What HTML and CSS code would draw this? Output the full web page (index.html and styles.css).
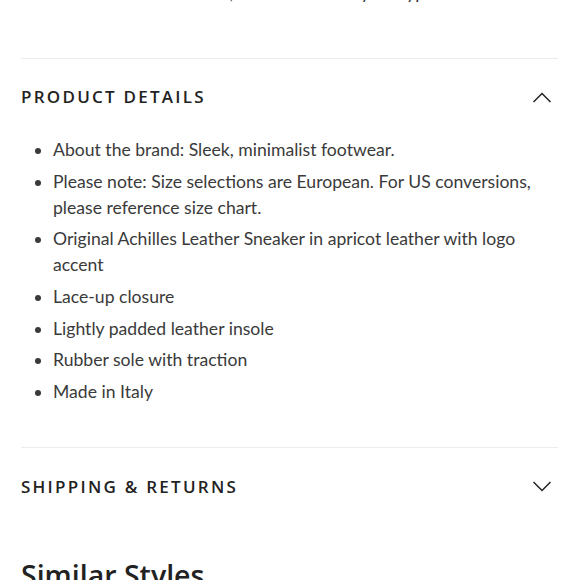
FILE: index.html
```html
<!DOCTYPE html>
<html>
<head>
<meta charset="utf-8">
<link rel="stylesheet" href="styles.css">
</head>
<body>
<div class="page">
  <p class="intro">Fits true to size, we recommend your typical fit.</p>

  <section class="acc">
    <div class="acc-head">
      <span class="acc-title">PRODUCT DETAILS</span>
      <svg class="chev" width="20" height="12" viewBox="0 0 20 12"><polyline points="1.5,11 10,2.5 18.5,11" fill="none" stroke="#222" stroke-width="1.5"/></svg>
    </div>
    <ul class="details">
      <li>About the brand: Sleek, minimalist footwear.</li>
      <li>Please note: Size selections are European. For US conversions, please reference size chart.</li>
      <li>Original Achilles Leather Sneaker in apricot leather with logo accent</li>
      <li>Lace-up closure</li>
      <li>Lightly padded leather insole</li>
      <li>Rubber sole with traction</li>
      <li>Made in Italy</li>
    </ul>
  </section>

  <section class="acc acc-closed">
    <div class="acc-head">
      <span class="acc-title">SHIPPING &amp; RETURNS</span>
      <svg class="chev" width="20" height="12" viewBox="0 0 20 12"><polyline points="1.5,1 10,9.5 18.5,1" fill="none" stroke="#222" stroke-width="1.5"/></svg>
    </div>
  </section>

  <h2 class="similar">Similar Styles</h2>
</div>
</body>
</html>
```
FILE: styles.css
```css
html, body {
  margin: 0;
  padding: 0;
  background: #fff;
}
body {
  font-family: Lato, "Open Sans", sans-serif;
  color: #333;
  overflow: hidden;
}
.page {
  padding: 0 22px 0 21px;
}
.intro {
  margin: -20px 0 0 0;
  padding-left: 90px;
  font-size: 17.6px;
  line-height: 26px;
  height: 78px;
  white-space: nowrap;
  overflow: hidden;
  box-sizing: border-box;
}
.acc {
  border-top: 1px solid #ececec;
}
.acc-head {
  display: flex;
  justify-content: space-between;
  align-items: center;
  padding: 28px 6px 20px 0;
  height: 20px;
}
.acc-title {
  font-family: "Open Sans", sans-serif;
  font-size: 17px;
  font-weight: 600;
  letter-spacing: 2.25px;
  color: #222;
  line-height: 20px;
}
.chev {
  display: block;
}
.details {
  margin: 10px 0 0 0;
  padding: 0 0 42px 32px;
  font-size: 17.6px;
  line-height: 26px;
  color: #3a3a3a;
}
.details li {
  margin-bottom: 5.7px;
}
.details li:last-child {
  margin-bottom: 0;
}
.acc-closed .acc-head {
  padding-top: 29px;
}
.similar {
  margin: 40px 0 0 0;
  font-family: "Open Sans", sans-serif;
  font-size: 28.5px;
  font-weight: 600;
  color: #222;
  line-height: 36px;
}
```
